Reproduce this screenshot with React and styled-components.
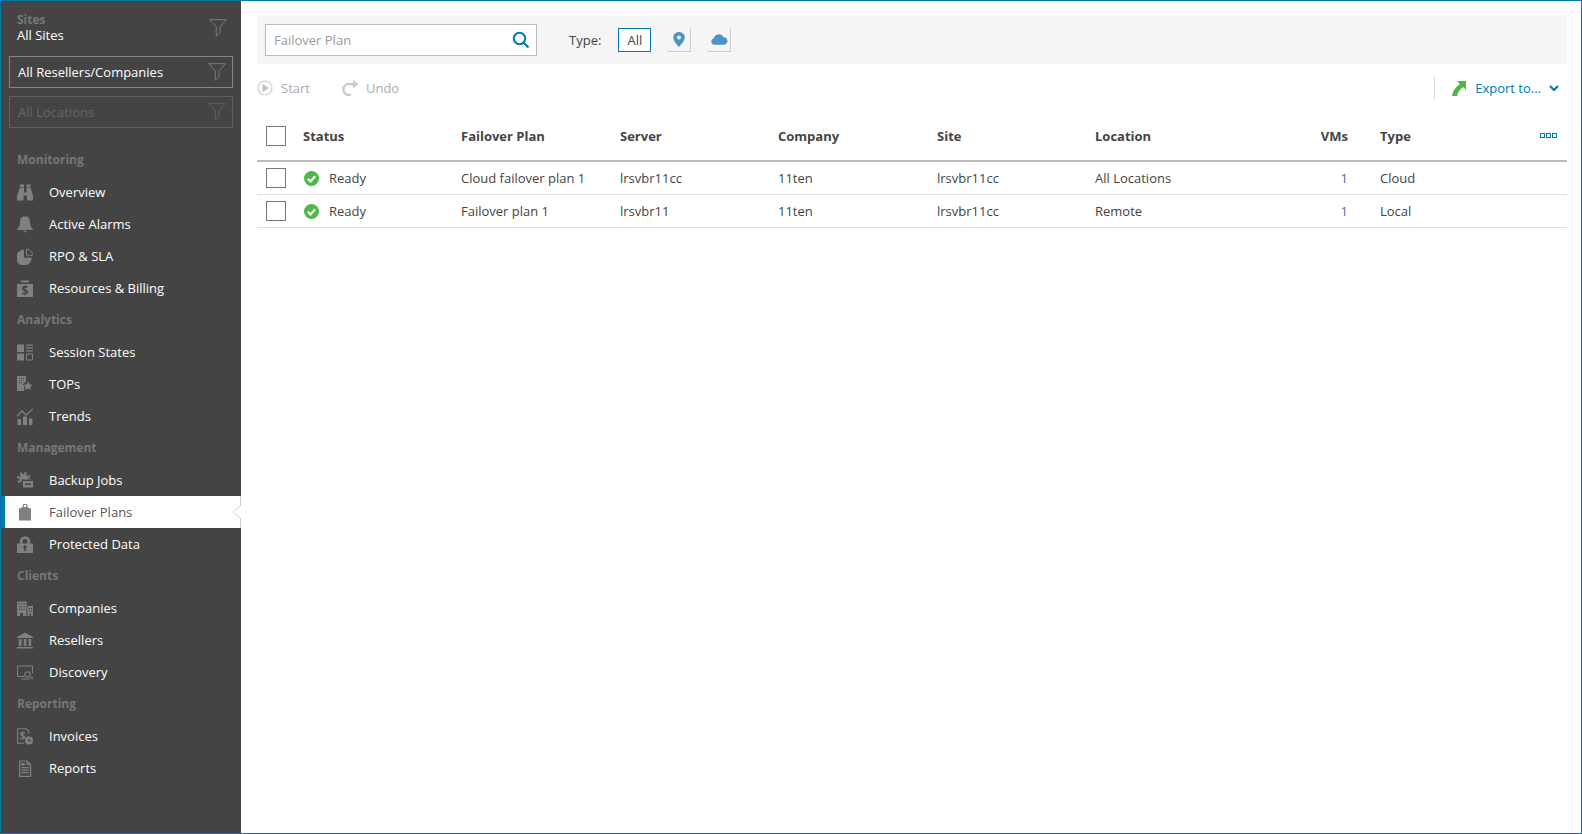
import React from "react";
import styled, { createGlobalStyle } from "styled-components";

const Global = createGlobalStyle`
  html, body { margin: 0; padding: 0; height: 100%; }
  body { font-family: "Open Sans", "Liberation Sans", sans-serif; font-size: 13px; color: #444; background: #fff; }
  #root { height: 100%; }
  * { box-sizing: border-box; }
`;

const Frame = styled.div`
  width: 1582px; height: 834px; display: flex; border: 1px solid #0079ad; overflow: hidden;
`;
const Sidebar = styled.nav`
  width: 240px; flex: none; background: #444; display: flex; flex-direction: column;
`;
const SitesBlock = styled.div`
  height: 55px; padding: 12px 14px 0 16px; display: flex; justify-content: space-between; align-items: flex-start;
`;
const SitesLabel = styled.div`
  font-size: 12px; font-weight: 700; color: #777; line-height: 14px;
`;
const SitesValue = styled.div`
  font-size: 13px; color: #fff; line-height: 16px;
`;
const SitesFunnel = styled.span`
  margin-top: 6px; display: block; height: 18px;
`;
const FilterBox = styled.div`
  height: 32px; margin: 0 8px 8px 8px; padding: 0 6px 0 8px;
  border: 1px solid ${p => (p.$off ? "#5e5e5e" : "#858585")};
  color: ${p => (p.$off ? "#666" : "#fff")};
  display: flex; align-items: center; justify-content: space-between;
`;
const SectionLabel = styled.div`
  height: 32px; padding: 0 0 2px 16px; display: flex; align-items: center;
  font-size: 12px; font-weight: 700; color: #777;
`;
const NavList = styled.div`
  margin-top: 8px;
`;
const NavItem = styled.div`
  position: relative; height: 32px; display: flex; align-items: center;
  padding-left: ${p => (p.$active ? "12px" : "16px")};
  border-left: ${p => (p.$active ? "4px solid #0079ad" : "0")};
  border-right: ${p => (p.$active ? "1px solid #ccc" : "0")};
  background: ${p => (p.$active ? "#fff" : "transparent")};
  color: ${p => (p.$active ? "#555" : "#fff")};
  svg { flex: none; }
`;
const NavText = styled.span`
  margin-left: 16px;
`;
const Notch = styled.svg`
  position: absolute; right: -1px; top: 9px;
`;
const Main = styled.main`
  flex: 1; min-width: 0; padding: 15px 14px 0 16px; display: flex; flex-direction: column;
`;
const FilterBar = styled.div`
  height: 48px; background: #f5f5f5; padding-left: 8px; display: flex; align-items: center;
`;
const SearchBox = styled.div`
  width: 272px; height: 32px; border: 1px solid #bbb; background: #fff; padding: 0 6px 0 8px;
  display: flex; align-items: center; justify-content: space-between; color: #999;
`;
const TypeLabel = styled.span`
  margin: 0 17px 0 32px; color: #444;
`;
const AllButton = styled.div`
  width: 33px; height: 24px; border: 1px solid #0079ad; background: #fff; color: #444;
  display: flex; align-items: center; justify-content: center; margin-right: 16px;
`;
const TypeButton = styled.div`
  width: 24px; height: 24px; border-right: 1px solid #ccc; border-bottom: 1px solid #ccc;
  padding-left: 1px;
  display: flex; align-items: center; justify-content: center; margin-right: 16px;
`;
const ActionBar = styled.div`
  height: 48px; display: flex; align-items: center; color: #aaa;
`;
const Action = styled.div`
  display: flex; align-items: center; margin-right: 32px;
`;
const ActionText = styled.span`
  margin-left: ${p => p.$gap}px;
`;
const ExportBox = styled.div`
  margin-left: auto; height: 24px; border-left: 1px solid #ddd; display: flex; align-items: center;
  padding: 0 8px 0 17px; color: #0079ad;
`;
const ExportText = styled.span`
  margin: 0 8px 0 9px;
`;
const Row = styled.div`
  height: ${p => (p.$head ? "50px" : "33px")};
  display: grid; align-items: center;
  grid-template-columns: 46px 158px 159px 158px 159px 158px 200px 53px 1fr 40px;
  border-bottom: ${p => (p.$head ? "2px solid #bbb" : "1px solid #ddd")};
  padding-bottom: ${p => (p.$head ? "1px" : "0")};
  font-weight: ${p => (p.$head ? 700 : 400)};
  color: #444;
`;
const Check = styled.div`
  width: 20px; height: 20px; border: 1px solid #777; background: #fff; margin-left: 9px;
  margin-top: ${p => (p.$head ? "1px" : "0")};
`;
const Status = styled.div`
  display: flex; align-items: center; gap: 10px; padding-left: 1px;
`;
const VmsCell = styled.div`
  text-align: right;
  color: ${p => (p.$data ? "#41729f" : "inherit")};
`;
const TypeCell = styled.div`
  padding-left: 32px;
`;
const ColumnsBtn = styled.div`
  display: flex; gap: 1px; justify-content: flex-end; padding-right: 10px;
`;
const Square = styled.i`
  width: 5px; height: 5px; border: 1px solid #0079ad; display: block;
`;
const Dollar = styled.text`
  font-family: "Open Sans", sans-serif; font-weight: 700; font-size: ${p => p.$size}px;
`;

const ic = "#808080";
const bg = "#444";
const Funnel = ({ c = "#7c7c7c" }) => (
  <svg width="18" height="18" viewBox="0 0 18 18"><path d="M.7.7h16.6l-6.300 7.200v5.600l-3.700 3.800V7.900z" fill="none" stroke={c} /></svg>
);
const S = ({ children }) => <svg width="16" height="17" viewBox="0 0 16 17" fill={ic}>{children}</svg>;

const icons = {
  overview: <S><path d="M3 .5h4v3H3zM9.500.5h4v3h-4zM2.800 4H7v4.500h2.500V4h4.200L16 11.500V16.500H10v-5H6.500v5H0v-5z" /></S>,
  alarms: <S><path d="M8 .5c3.500 0 5 2 5 5.500 0 3.500 1 5.500 3 7.500v.5H0v-.5c2-2 3-4 3-7.500C3 2.500 4.500.5 8 .5zM6 14.800h4L8 16.800z" /></S>,
  rpo: <S><path d="M7 1.800v8h7.800A7.900 7.900 0 1 1 7 1.800z" /><path d="M9.500 1a6 6 0 0 1 6 6.200h-6z" fill="none" stroke={ic} /></S>,
  billing: <S><path d="M4 .5h8v2H4z" /><path d="M0 4h16v13H0z" /><Dollar x="8" y="14.500" textAnchor="middle" fill={bg} $size={12}>$</Dollar></S>,
  session: <S><path d="M0 .5h7v7.500H0zM0 9.500h7v7H0zM9 .5h7v1.200H9zM9 3.300h7v1.200H9zM9 6.200h7v1.200H9z" /><path d="M9.500 10h6v6h-6z" fill="none" stroke={ic} /></S>,
  tops: <S><path d="M0 0h9v5.500L6 8.500l1.500 2L7 15H0z" /><path d="M2 2h1v1H2zM4 2h1v1H4zM6 2h1v1H6zM2 4.200h1v1H2zM4 4.200h1v1H4zM6 4.200h1v1H6zM2 6.400h1v1H2zM4 6.400h1v1H4z" fill={bg} /><path d="M11 4.800l1.600 3.400 3.400.4-2.500 2.400.6 3.400-3.100-1.700-3.100 1.700.6-3.400L6 8.600l3.400-.4z" stroke={bg} strokeWidth=".5" /></S>,
  trends: <S><path d="M0 8.500L5 3l4 4 7-6" fill="none" stroke={ic} strokeWidth="1.300" /><path d="M.5 11H4v6H.5zM6 8.500h4V17H6zM12 10.500h3.500V17H12z" /></S>,
  jobs: <S><circle cx="6.800" cy="6.800" r="4.700" /><circle cx="6.800" cy="6.800" r="5.800" fill="none" stroke={ic} strokeWidth="2" strokeDasharray="2.200 2.350" /><path d="M4.500 7.500H16v8H4.500z" fill={bg} /><path d="M6 9h10v6.500H6z" /><path d="M8 11.500h6v1.500H8z" fill={bg} /></S>,
  failover: <S><path d="M6.200 3.500V1.900a1.800 1.800 0 0 1 3.600 0v1.600" fill="none" stroke={ic} strokeWidth="1.100" /><path d="M4.600 3h6.800v1.200H14v12.300H2V4.200h2.600z" /></S>,
  protected: <S><path d="M2.800 8V5.500a5.200 5.200 0 0 1 10.400 0V8h-2.700V5.500a2.500 2.500 0 0 0-5 0V8z" /><path d="M0 7.500h16v9.500H0z" /><path d="M8 9.500a1.700 1.700 0 0 1 .8 3.200V15H7.200v-2.300A1.700 1.700 0 0 1 8 9.500z" fill={bg} /></S>,
  companies: <S><path d="M0 1.500h9.500V16H6v-3H3v3H0zM10.500 6H16v10h-2v-2.500h-1.500V16h-2z" /><path d="M1.800 3.300h1.200v1.200H1.800zM4.200 3.300h1.200v1.200H4.200zM6.600 3.300h1.200v1.200H6.600zM1.800 6h1.200v1.200H1.800zM4.200 6h1.200v1.200H4.200zM6.600 6h1.200v1.200H6.600zM1.800 8.700h1.200v1.200H1.800zM4.200 8.700h1.200v1.200H4.200zM6.600 8.700h1.200v1.200H6.600zM12 8h1.200v1.200H12zM14 8h1.200v1.200H14zM12 10.500h1.200v1.200H12zM14 10.500h1.200v1.200H14z" fill={bg} /></S>,
  resellers: <S><path d="M8 .5l8 4.500v1H0V5zM1.800 7h2.700v7H1.800zM6.700 7h2.700v7H6.700zM11.500 7h2.700v7h-2.700zM0 15h16v1.500H0z" /></S>,
  discovery: <S><path d="M.5 2h15v7.500M.5 2v10.500h6.500" fill="none" stroke={ic} /><circle cx="10.500" cy="10.500" r="2.700" fill="none" stroke={ic} strokeWidth="1.100" /><path d="M4 14.500h8.500v1H4zM13.800 13.500H16v1h-2.200zM14.400 12.900h1v2.200h-1z" /></S>,
  invoices: <S><path d="M.6.800h8.900l2.300 2.500v2.200M.6.800v14.500h6.400" fill="none" stroke={ic} strokeWidth="1.100" /><Dollar x="5.500" y="10.500" textAnchor="middle" fill={ic} $size={10}>$</Dollar><circle cx="12" cy="12.500" r="4" /><path d="M11.800 10.300v2.600h2.400" fill="none" stroke={bg} /></S>,
  reports: <S><path d="M2.600 1h7.400l3.600 3.600v11.800h-11z" fill="none" stroke={ic} strokeWidth="1.200" /><path d="M9.500 1v4h4L9.500 1zM4.200 3h3.600v2.500H4.200zM4.200 7h7.700v1.200H4.200zM4.200 9.500h7.700v1.200H4.200zM4.200 12h7.700v1.200H4.200z" /></S>,
};

const sections = [
  ["Monitoring", [["Overview", "overview"], ["Active Alarms", "alarms"], ["RPO & SLA", "rpo"], ["Resources & Billing", "billing"]]],
  ["Analytics", [["Session States", "session"], ["TOPs", "tops"], ["Trends", "trends"]]],
  ["Management", [["Backup Jobs", "jobs"], ["Failover Plans", "failover", true], ["Protected Data", "protected"]]],
  ["Clients", [["Companies", "companies"], ["Resellers", "resellers"], ["Discovery", "discovery"]]],
  ["Reporting", [["Invoices", "invoices"], ["Reports", "reports"]]],
];

const rows = [
  ["Cloud failover plan 1", "lrsvbr11cc", "11ten", "lrsvbr11cc", "All Locations", "1", "Cloud"],
  ["Failover plan 1", "lrsvbr11", "11ten", "lrsvbr11cc", "Remote", "1", "Local"],
];

const ReadyIcon = () => (
  <svg width="15" height="15" viewBox="0 0 15 15"><circle cx="7.500" cy="7.500" r="7.500" fill="#4cb848" /><path d="M3.800 7.700l2.700 2.700L11.200 5.300" fill="none" stroke="#fff" strokeWidth="2.200" /></svg>
);

export default function App() {
  return (
    <>
      <Global />
      <Frame>
        <Sidebar>
          <SitesBlock>
            <div>
              <SitesLabel>Sites</SitesLabel>
              <SitesValue>All Sites</SitesValue>
            </div>
            <SitesFunnel><Funnel /></SitesFunnel>
          </SitesBlock>
          <FilterBox>All Resellers/Companies<Funnel /></FilterBox>
          <FilterBox $off>All Locations<Funnel c="#606060" /></FilterBox>
          <NavList>
            {sections.map(([title, items]) => (
              <React.Fragment key={title}>
                <SectionLabel>{title}</SectionLabel>
                {items.map(([label, key, active]) => (
                  <NavItem key={label} $active={active}>
                    {icons[key]}
                    <NavText>{label}</NavText>
                    {active && (
                      <Notch width="9" height="14" viewBox="0 0 9 14">
                        <path d="M9 1H8L1 7l7 6h1z" fill="#fff" stroke="none" />
                        <path d="M8 1L1 7l7 6" fill="none" stroke="#ccc" />
                      </Notch>
                    )}
                  </NavItem>
                ))}
              </React.Fragment>
            ))}
          </NavList>
        </Sidebar>
        <Main>
          <FilterBar>
            <SearchBox>
              Failover Plan
              <svg width="18" height="18" viewBox="0 0 18 18"><circle cx="7.500" cy="7.500" r="5.700" fill="none" stroke="#0079ad" strokeWidth="2" /><path d="M11.500 11.500l5 5" stroke="#0079ad" strokeWidth="2.200" /></svg>
            </SearchBox>
            <TypeLabel>Type:</TypeLabel>
            <AllButton>All</AllButton>
            <TypeButton>
              <svg width="12" height="15" viewBox="0 0 13 17"><path fillRule="evenodd" d="M6.500 0A6.300 6.300 0 0 1 13 6.300C13 10 9 14 6.500 17 4 14 0 10 0 6.300A6.300 6.300 0 0 1 6.500 0zm0 4a2.300 2.300 0 1 0 0 4.600 2.300 2.300 0 0 0 0-4.600z" fill="#4a94c4" /></svg>
            </TypeButton>
            <TypeButton>
              <svg width="17" height="11" viewBox="0 0 16 10"><path d="M3 10A3 3 0 0 1 2.500 4.100 5 5 0 0 1 11.800 2.800 3.700 3.700 0 0 1 13 10z" fill="#4a94c4" /></svg>
            </TypeButton>
          </FilterBar>
          <ActionBar>
            <Action>
              <svg width="16" height="16" viewBox="0 0 16 16"><circle cx="8" cy="8" r="7" fill="none" stroke="#ccc" strokeWidth="1.200" /><path d="M5.500 3.800L12 8l-6.500 4.200z" fill="#c4c4c4" /></svg>
              <ActionText $gap={8}>Start</ActionText>
            </Action>
            <Action>
              <svg width="17" height="16" viewBox="0 0 17 16"><path d="M9 14.500A5.500 5.500 0 1 1 8.500 4.200h3" fill="none" stroke="#ccc" strokeWidth="2.400" /><path d="M11 0l5.500 4.200-5.500 4.200z" fill="#ccc" /></svg>
              <ActionText $gap={7}>Undo</ActionText>
            </Action>
            <ExportBox>
              <svg width="14" height="15" viewBox="0 0 14 15"><path d="M5 0h9v9l-2.800-3C8.500 8 5.800 11 5 15H0c.6-5 3.500-9 8-12z" fill="#4cb848" /></svg>
              <ExportText>Export to...</ExportText>
              <svg width="10" height="7" viewBox="0 0 10 7"><path d="M1 1l4 4 4-4" fill="none" stroke="#0079ad" strokeWidth="2" /></svg>
            </ExportBox>
          </ActionBar>
          <Row $head>
            <Check $head />
            <div>Status</div>
            <div>Failover Plan</div>
            <div>Server</div>
            <div>Company</div>
            <div>Site</div>
            <div>Location</div>
            <VmsCell>VMs</VmsCell>
            <TypeCell>Type</TypeCell>
            <ColumnsBtn><Square /><Square /><Square /></ColumnsBtn>
          </Row>
          {rows.map((r, i) => (
            <Row key={i}>
              <Check />
              <Status><ReadyIcon />Ready</Status>
              <div>{r[0]}</div>
              <div>{r[1]}</div>
              <div>{r[2]}</div>
              <div>{r[3]}</div>
              <div>{r[4]}</div>
              <VmsCell $data>{r[5]}</VmsCell>
              <TypeCell>{r[6]}</TypeCell>
              <div />
            </Row>
          ))}
        </Main>
      </Frame>
    </>
  );
}
